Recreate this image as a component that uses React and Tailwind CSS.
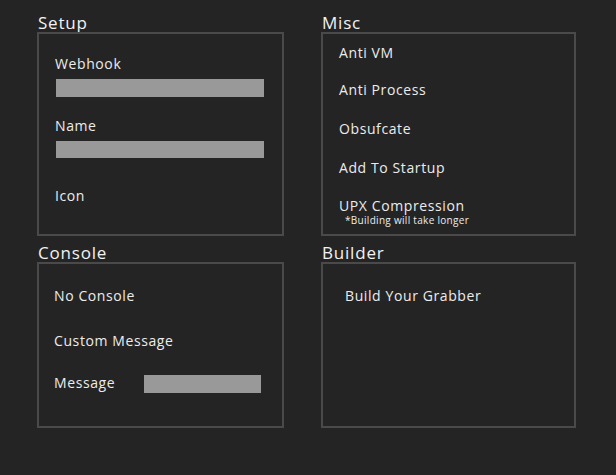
const Section = ({ title, className, children }) => (
    <div className="flex flex-col">
        <h2 className="h-[20px] text-[17px] leading-[22px] tracking-[0.8px] text-[#f2f2f2] pl-[1px]">{title}</h2>
        <div className={`border-2 border-[#4a4a4a] ${className}`}>{children}</div>
    </div>
);

const Bar = ({ className }) => <div className={`bg-[#999999] ${className}`} />;

export default function App() {
    return (
        <div
            className="min-h-screen w-full bg-[#242424] pl-[37px] pt-[12px] text-[#ececec]"
            style={{ fontFamily: '"Open Sans", "Noto Sans", sans-serif' }}
        >
            <div className="grid grid-cols-[247px_255px] gap-x-[37px] gap-y-[6px] text-[14px] leading-[20px] tracking-[0.6px]">
                <Section title="Setup" className="h-[204px] pl-[16px] pt-[20px]">
                    <p>Webhook</p>
                    <Bar className="mt-[5px] ml-[1px] h-[18px] w-[208px]" />
                    <p className="mt-[19px]">Name</p>
                    <Bar className="mt-[5px] ml-[1px] h-[17px] w-[208px]" />
                    <p className="mt-[28px]">Icon</p>
                </Section>

                <Section title="Misc" className="h-[204px] pl-[16px] pt-[9px]">
                    <div className="flex flex-col gap-[17px]">
                        <p>Anti VM</p>
                        <p>Anti Process</p>
                        <p className="mt-[2px]">Obsufcate</p>
                        <p className="mt-[2px]">Add To Startup</p>
                        <div className="mt-[2px]">
                            <p className="leading-[18px]">UPX Compression</p>
                            <p className="pl-[6px] text-[10px] leading-[10px] tracking-[0.3px]">*Building will take longer</p>
                        </div>
                    </div>
                </Section>

                <Section title="Console" className="h-[166px] pl-[15px] pt-[22px]">
                    <p>No Console</p>
                    <p className="mt-[25px]">Custom Message</p>
                    <div className="mt-[22px] flex items-center">
                        <p className="w-[90px]">Message</p>
                        <Bar className="mt-[2px] h-[18px] w-[117px]" />
                    </div>
                </Section>

                <Section title="Builder" className="h-[166px] pl-[22px] pt-[22px]">
                    <p>Build Your Grabber</p>
                </Section>
            </div>
        </div>
    );
}
